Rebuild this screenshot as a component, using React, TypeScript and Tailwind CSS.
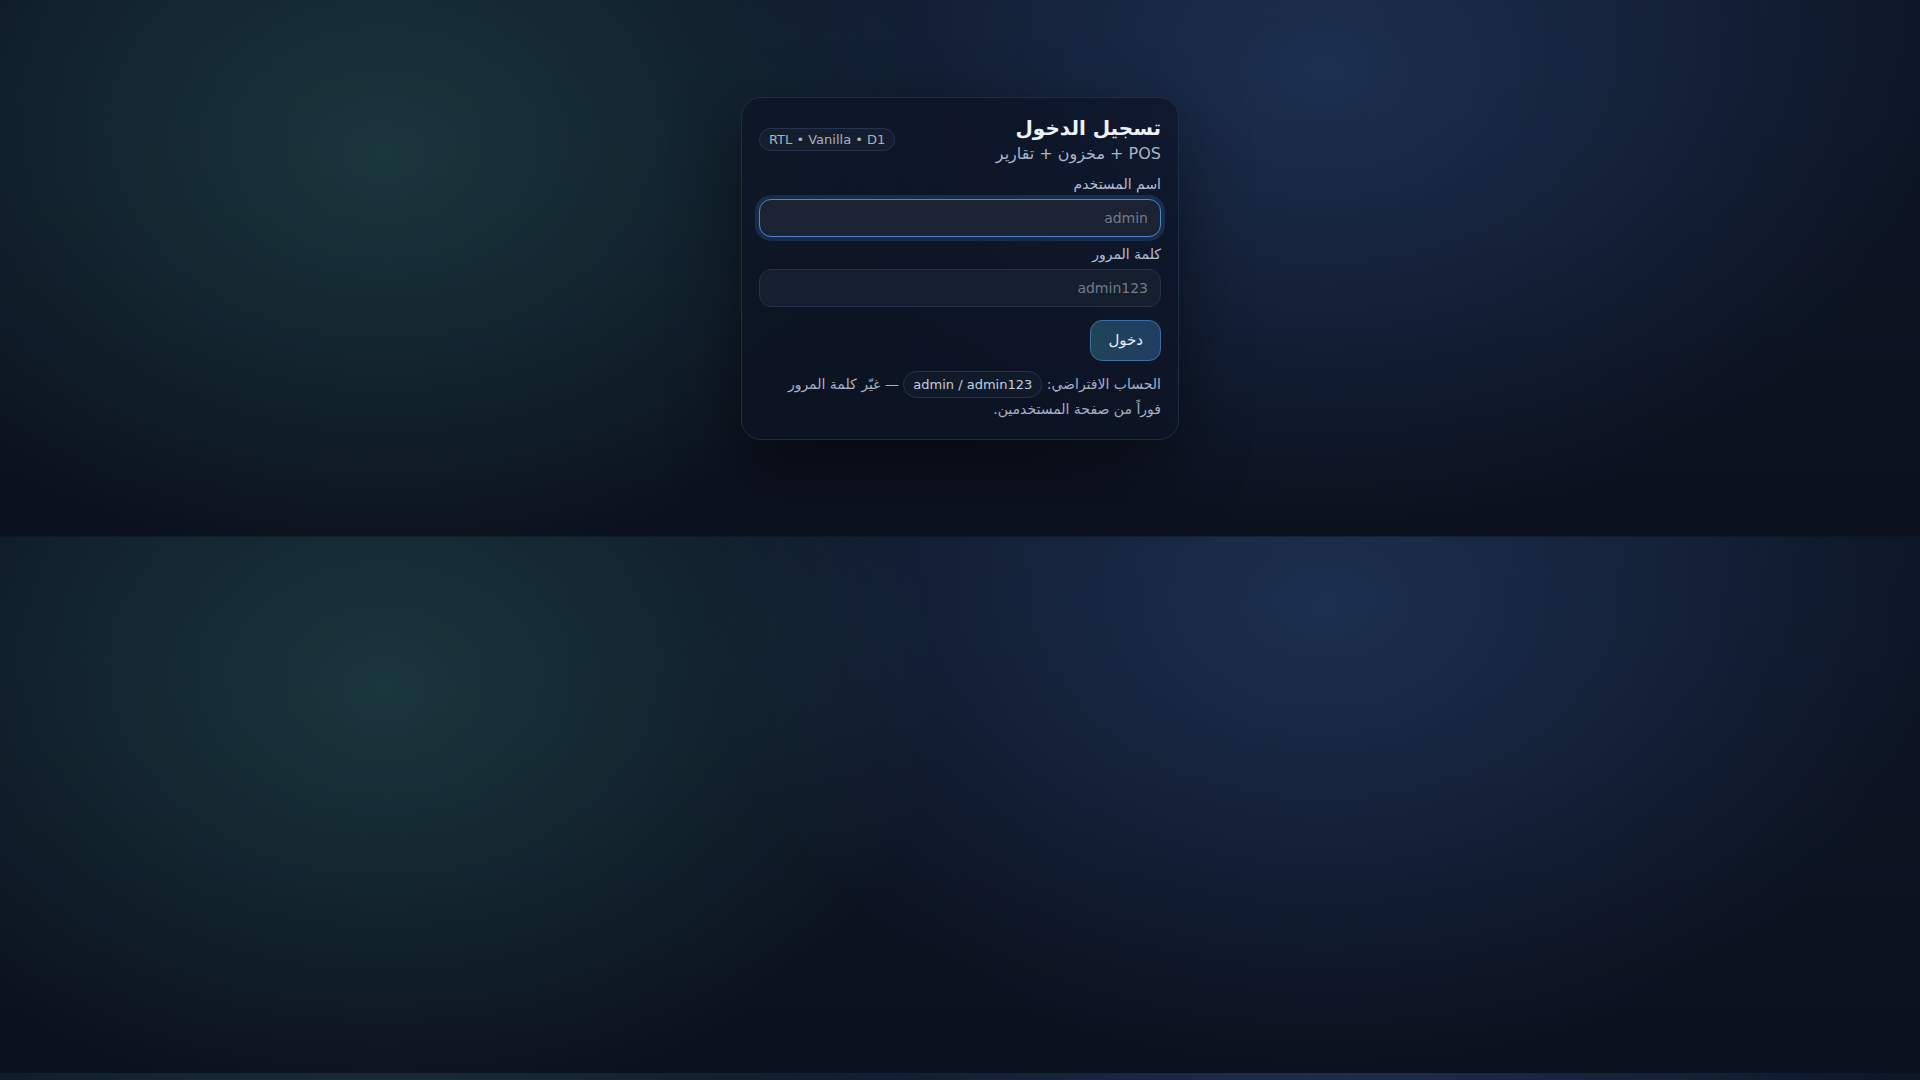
export default function App() {
  return (
    <div
      dir="rtl"
      className="min-h-[1080px] w-full bg-[#0b1220] bg-[image:radial-gradient(560px_420px_at_20%_29%,rgba(80,190,165,0.2),transparent),radial-gradient(620px_460px_at_69%_13%,rgba(80,130,215,0.24),transparent),linear-gradient(180deg,#0d1626,#0b111e)] bg-[length:100%_536.5px] bg-repeat pt-[97px] text-[#e5ebf4] [font-family:'DejaVu_Sans',sans-serif]"
    >
      <div className="mx-auto w-[438px] rounded-[20px] border border-[#1f2e48] bg-[rgba(13,20,36,0.72)] p-[17px] shadow-[0_24px_70px_rgba(0,0,0,0.45)]">
        {/* Header */}
        <div className="flex items-center justify-between">
          <div>
            <h1 className="text-[20px] font-bold leading-[26px] text-[#eef2f8]">تسجيل الدخول</h1>
            <p className="text-[16px] leading-[26px] text-[#a9b5c9]">POS + مخزون + تقارير</p>
          </div>
          <span className="mb-[3px] flex h-[23px] items-center rounded-full border border-[#24344f] bg-[rgba(255,255,255,0.03)] px-[9px] text-[13px] text-[#a7b2c5]">
            RTL • Vanilla • D1
          </span>
        </div>

        {/* Form */}
        <label className="mb-[5px] mt-[7px] block text-[14px] leading-[20px] text-[#b3bdce]">اسم المستخدم</label>
        <input
          placeholder="admin"
          className="block h-[38px] w-full rounded-[12px] border border-[#4d86cc] bg-[#1a2233] px-[12px] text-[14px] text-[#e5ebf4] shadow-[0_0_0_4px_rgba(52,100,170,0.28)] outline-none placeholder:text-[#737b88]"
        />

        <label className="mb-[5px] mt-[7px] block text-[14px] leading-[20px] text-[#b3bdce]">كلمة المرور</label>
        <input
          type="text"
          placeholder="admin123"
          className="block h-[38px] w-full rounded-[12px] border border-[#243249] bg-[#161f2f] px-[12px] text-[14px] text-[#e5ebf4] outline-none placeholder:text-[#737b88]"
        />

        <div className="mt-[13px] flex">
          <button className="h-[41px] rounded-[12px] border border-[#3e6ea8] bg-[linear-gradient(90deg,#1f4457,#213d62)] px-[17px] text-[15px] text-[#e7eef8]">
            دخول
          </button>
        </div>

        <p className="mt-[11px] pl-[6px] text-[14px] leading-[25px] text-[#a6b1c3]">
          الحساب الافتراضي:{' '}
          <span className="rounded-full border border-[#24344f] bg-[#111a2b] px-[9px] py-[5px] text-[13px] text-[#c5cede]" dir="ltr">
            admin / admin123
          </span>{' '}
          — غيّر كلمة المرور فوراً من صفحة المستخدمين.
        </p>
      </div>
    </div>
  )
}
